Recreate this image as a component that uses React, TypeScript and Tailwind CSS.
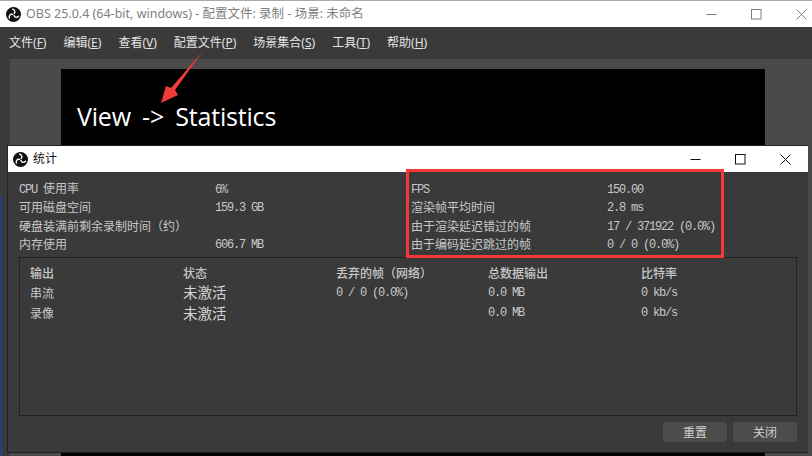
import React from "react";

const M = ({ children }: { children: React.ReactNode }) => (
  <span className="font-['Liberation_Mono',monospace] text-[12px] tracking-[-1.2px]">{children}</span>
);

const Logo = ({ size }: { size: number }) => (
  <svg width={size} height={size} viewBox="0 0 24 24" className="shrink-0">
    <circle cx="12" cy="12" r="12" fill="#111" />
    <g fill="none" stroke="#fff" strokeWidth="2.2" strokeLinecap="round">
      <path d="M13 10.5 C15.5 8 14 4.5 10.5 3.5" />
      <path d="M13 10.5 C15.5 8 14 4.5 10.5 3.5" transform="rotate(120 12 12)" />
      <path d="M13 10.5 C15.5 8 14 4.5 10.5 3.5" transform="rotate(240 12 12)" />
    </g>
  </svg>
);

const Controls = ({ color, gap }: { color: string; gap: string }) => (
  <div className={`flex items-center ${gap}`}>
    <svg width="11" height="11" viewBox="0 0 11 11"><path d="M0.5 5.5H10.5" stroke={color} /></svg>
    <svg width="11" height="11" viewBox="0 0 11 11"><rect x="0.5" y="0.5" width="9.5" height="9.5" fill="none" stroke={color} /></svg>
    <svg width="11" height="11" viewBox="0 0 11 11"><path d="M0.5 0.5L10.5 10.5M10.5 0.5L0.5 10.5" stroke={color} /></svg>
  </div>
);

const menus: [string, string][] = [
  ["文件", "F"],
  ["编辑", "E"],
  ["查看", "V"],
  ["配置文件", "P"],
  ["场景集合", "S"],
  ["工具", "T"],
  ["帮助", "H"],
];

const stats: [React.ReactNode, React.ReactNode, React.ReactNode, React.ReactNode][] = [
  [<><M>CPU </M> 使用率</>, <M>6%</M>, <M>FPS</M>, <M>150.00</M>],
  ["可用磁盘空间", <M>159.3 GB</M>, "渲染帧平均时间", <M>2.8 ms</M>],
  ["硬盘装满前剩余录制时间（约）", "", "由于渲染延迟错过的帧", <M>17 / 371922 (0.0%)</M>],
  ["内存使用", <M>606.7 MB</M>, "由于编码延迟跳过的帧", <M>0 / 0 (0.0%)</M>],
];

const Status = () => <span className="text-[14.5px] text-[#d4d4d4]">未激活</span>;

export default function App() {
  return (
    <div className="relative w-[812px] h-[456px] overflow-hidden bg-[#3a3a3a] font-['Noto_Sans','Noto_Sans_CJK_SC',sans-serif]">
      <div className="flex flex-col h-full">
        <div className="flex items-center h-[27px] bg-white border-t border-t-[#aaaaaa] pl-[6px] pr-[5px] shrink-0">
          <Logo size={15} />
          <span className="ml-[5px] text-[12.5px] text-[#808080] whitespace-nowrap">
            OBS 25.0.4 (64-bit, windows) - 配置文件: 录制 - 场景: 未命名
          </span>
          <div className="ml-auto">
            <Controls color="#808080" gap="gap-[34px]" />
          </div>
        </div>
        <div className="flex items-center h-[32px] gap-[17px] pl-[9px] bg-[#3a3a3a] shrink-0 pb-[1px]">
          {menus.map(([t, k]) => (
            <span key={k} className="text-[12px] text-[#e4e4e4] whitespace-nowrap">
              {t}(<span className="underline">{k}</span>)
            </span>
          ))}
        </div>
        <div className="flex-1 ml-[10px] bg-[#4a4a4a] pt-[10px] pl-[51px] pr-[47px] flex flex-col">
          <div className="flex-1 bg-black pl-[16px] pt-[28px]">
            <span className="text-[25px] leading-[38px] text-white font-['Open_Sans',sans-serif] tracking-[-0.2px] [word-spacing:5px]">View -&gt; Statistics</span>
          </div>
        </div>
      </div>

      <svg width="60" height="60" viewBox="150 50 60 60" className="absolute left-[150px] top-[50px]">
        <polygon points="203,51 175,90 178,95 161,103 166,86 171,88" fill="#f23b3b" />
      </svg>

      <div className="absolute left-0 top-[195px] w-[2px] h-[261px] bg-[#2b3f78]" />

      <div className="absolute left-[7px] top-[145px] w-[801px] h-[308px] flex flex-col bg-[#3a3a3a] border border-[#222222] border-r-0">
        <div className="flex items-center h-[26px] bg-white pl-[5px] pr-[17px] shrink-0">
          <Logo size={15} />
          <span className="ml-[5px] text-[12px] text-[#111]">统计</span>
          <div className="ml-auto">
            <Controls color="#111111" gap="gap-[34px]" />
          </div>
        </div>
        <div className="flex-1 flex flex-col pl-[11px] pr-[11px] pt-[7.5px] pb-[10px] text-[12px] text-[#c8c8c8] font-['Noto_Sans_CJK_SC',sans-serif]">
          <div className="grid grid-cols-[196px_196px_196px_1fr] auto-rows-[18.5px] items-center leading-none">
            {stats.map((r, i) => (
              <React.Fragment key={i}>
                <div className="whitespace-nowrap">{r[0]}</div>
                <div className="whitespace-nowrap">{r[1]}</div>
                <div className="whitespace-nowrap">{r[2]}</div>
                <div className="whitespace-nowrap">{r[3]}</div>
              </React.Fragment>
            ))}
          </div>
          <div className="flex-1 mt-[3.5px] border border-[#222222] pl-[10px] pt-[5px]">
            <div className="grid grid-cols-[153px_153px_152px_153px_1fr] grid-rows-[19px_21px_20px] items-center leading-none whitespace-nowrap">
              <div className="font-medium">输出</div>
              <div className="font-medium">状态</div>
              <div className="font-medium">丢弃的帧（网络）</div>
              <div className="font-medium">总数据输出</div>
              <div className="font-medium">比特率</div>
              <div>串流</div>
              <Status />
              <M>0 / 0 (0.0%)</M>
              <M>0.0 MB</M>
              <M>0 kb/s</M>
              <div>录像</div>
              <Status />
              <div />
              <M>0.0 MB</M>
              <M>0 kb/s</M>
            </div>
          </div>
          <div className="flex justify-end gap-[6px] mt-[6px]">
            <button className="w-[64px] h-[20px] rounded-[3px] bg-[#4c4c4c] text-[12px] text-[#d0d0d0] leading-none">重置</button>
            <button className="w-[64px] h-[20px] rounded-[3px] bg-[#4c4c4c] text-[12px] text-[#d0d0d0] leading-none">关闭</button>
          </div>
        </div>
      </div>

      <div className="absolute left-[406px] top-[169px] w-[318px] h-[89px] border-[3px] border-[#f53838]" />
    </div>
  );
}
